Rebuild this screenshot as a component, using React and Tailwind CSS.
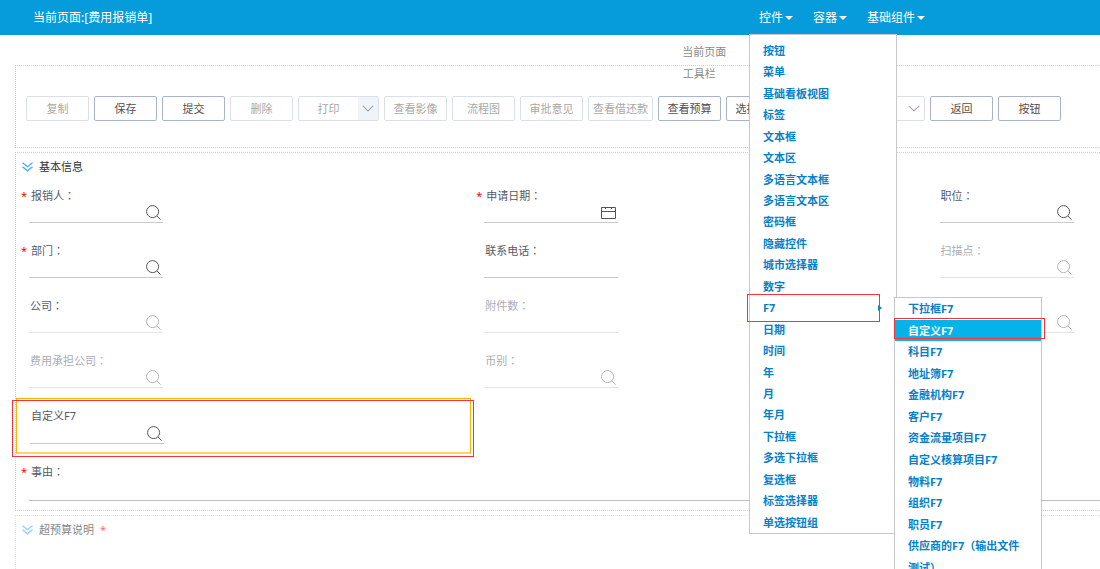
// src/App.jsx
import React from 'react';

const MENUS = ['控件', '容器', '基础组件'];

const CONTROLS = [
    '按钮', '菜单', '基础看板视图', '标签', '文本框', '文本区', '多语言文本框', '多语言文本区',
    '密码框', '隐藏控件', '城市选择器', '数字', 'F7', '日期', '时间', '年', '月', '年月',
    '下拉框', '多选下拉框', '复选框', '标签选择器', '单选按钮组',
];

const F7_TYPES = [
    '下拉框F7', '自定义F7', '科目F7', '地址簿F7', '金融机构F7', '客户F7', '资金流量项目F7',
    '自定义核算项目F7', '物料F7', '组织F7', '职员F7', '供应商的F7（输出文件测试）',
];

const FIELDS = [
    { id: 'claimant', label: '报销人', icon: 'search', required: true },
    { id: 'apply-date', label: '申请日期', icon: 'calendar', required: true },
    { id: 'position', label: '职位', icon: 'search' },
    { id: 'department', label: '部门', icon: 'search', required: true },
    { id: 'phone', label: '联系电话' },
    { id: 'scan-point', label: '扫描点', icon: 'search', disabled: true },
    { id: 'company', label: '公司', icon: 'search', disabled: true, darkLabel: true },
    { id: 'attachments', label: '附件数', disabled: true },
    { id: 'extra', label: '', icon: 'search', disabled: true },
    { id: 'cost-company', label: '费用承担公司', icon: 'search', disabled: true },
    { id: 'currency', label: '币别', icon: 'search', disabled: true },
];

const SearchIcon = () => (
    <svg viewBox="0 0 15 15" className="w-[15px] h-[15px]" fill="none" stroke="currentColor" strokeWidth="1">
        <circle cx="6.6" cy="6.6" r="6" />
        <path d="M11 11l3.6 3.6" />
    </svg>
);

const CalendarIcon = () => (
    <svg viewBox="0 0 15 15" className="w-[15px] h-[15px]" fill="none" stroke="currentColor">
        <path d="M.5 2.5h14v11H.5zM.5 6.5h14M4.5 2v2M10.5 2v2" />
    </svg>
);

const ChevronIcon = () => (
    <svg viewBox="0 0 12 7" className="w-3 h-[7px] text-[#a3a8b2]" fill="none" stroke="currentColor" strokeWidth="1.2">
        <path d="M.8.8L6 6 11.2.8" />
    </svg>
);

const CollapseIcon = () => (
    <svg viewBox="0 0 11 10" className="w-[11px] h-[10px] text-[#4bb0f0]" fill="none" stroke="currentColor" strokeWidth="1.4">
        <path d="M.5.7l5 4 5-4M.5 4.8l5 4 5-4" />
    </svg>
);

const ToolButton = ({ children, disabled, wide }) => (
    <button
        type="button"
        disabled={disabled}
        className={`h-[25px] shrink-0 rounded-[2px] border whitespace-nowrap ${wide ? 'w-[65px]' : 'w-[63px]'} ${
            disabled ? 'border-[#dadfea] text-[#a8a8a8]' : 'border-[#a9b4cc] text-[#505050]'
        }`}
    >
        {children}
    </button>
);

// The TC face centres the full-width colon
const Colon = () => <span className="font-['Noto_Sans_CJK_TC',sans-serif]">：</span>;

const Field = ({ id, label, icon, required, disabled, darkLabel, selected }) => (
    <div
        className={`relative h-full pl-[13px] pt-[9px] ${
            selected ? 'border border-b-2 border-[#ffb300] border-b-[#ffd466]' : ''
        }`}
    >
        <label
            htmlFor={id}
            className={`relative block h-4 leading-4 ${required ? 'pl-[2px]' : 'pl-px'} ${
                disabled && !darkLabel ? 'text-[#a9adb5]' : 'text-[#565b66]'
            }`}
        >
            {required && <span className="absolute -left-2 top-px text-[#ff0000]">*</span>}
            {label}
            {label && !selected && <Colon />}
        </label>
        <div
            className={`flex h-5 w-[134px] items-center border-b pb-px pr-[2px] ${
                disabled ? 'border-[#e4e4e4] text-[#b5b5b5]' : 'border-[#cbcbcb] text-[#555]'
            }`}
        >
            <input id={id} disabled={disabled} className="h-full min-w-0 flex-1 outline-none" />
            {icon && (
                <button type="button" disabled={disabled} aria-label="选择">
                    {icon === 'search' ? <SearchIcon /> : <CalendarIcon />}
                </button>
            )}
        </div>
        {selected && (
            <div className="pointer-events-none absolute -left-[5px] -right-1 top-px -bottom-[5px] border border-[#f5333a]" />
        )}
    </div>
);

const F7Menu = () => (
    <ul className="absolute left-[144px] top-0 z-10 grid h-[282px] w-[148px] grid-rows-13 border border-[#c6c8cc] bg-white">
        {F7_TYPES.map((name) => (
            <li
                key={name}
                className={`relative ${name === '自定义F7' ? 'bg-[#05b2ea]' : ''} ${
                    name.length > 12 ? 'row-span-2' : ''
                }`}
            >
                <a
                    href="#"
                    className={`block px-[13px] leading-[22px] ${name === '自定义F7' ? 'text-white' : 'text-[#0780c8]'}`}
                >
                    {name}
                </a>
                {name === '自定义F7' && (
                    <div className="pointer-events-none absolute -left-px -right-1 -top-[2px] bottom-[2px] border border-[#f5333a]" />
                )}
            </li>
        ))}
    </ul>
);

const ControlMenu = () => (
    <ul className="absolute left-0 top-[34px] z-10 grid h-[500px] w-[148px] auto-rows-fr border border-[#c6c8cc] bg-white pt-[5px] text-[11px] font-bold">
        {CONTROLS.map((name) => (
            <li key={name} className="relative">
                <a href="#" className="flex items-center justify-between pl-[13px] pr-[14px] leading-[22px] text-[#0780c8]">
                    {name}
                    {name === 'F7' && (
                        <span className="border-y-[3px] border-l-[4px] border-y-transparent border-l-[#0780c8]" />
                    )}
                </a>
                {name === 'F7' && (
                    <>
                        <F7Menu />
                        <div className="pointer-events-none absolute -left-[3px] -top-[3px] right-4 -bottom-[3px] border border-[#f5333a]" />
                    </>
                )}
            </li>
        ))}
    </ul>
);

const SectionTitle = ({ children }) => (
    <h2 className="flex h-[25px] items-center gap-[6px] pl-[6px] pt-[3px]">
        <CollapseIcon />
        {children}
    </h2>
);

const App = () => {
    return (
        <div className="flex h-screen flex-col overflow-hidden bg-white font-['Noto_Sans','Noto_Sans_CJK_SC',sans-serif] text-[11px] leading-4">
            <header className="flex h-[35px] shrink-0 items-center justify-between bg-[#069cdc] pl-[33px] pr-[165px] text-xs text-white">
                <h1>当前页面:[费用报销单]</h1>
                <nav className="relative flex h-full">
                    {MENUS.map((name) => (
                        <button key={name} type="button" className="flex items-center gap-[2px] px-[10px]">
                            {name}
                            <span className="border-x-4 border-t-4 border-x-transparent border-t-white" />
                        </button>
                    ))}
                    <ControlMenu />
                </nav>
            </header>

            <main className="flex flex-1 flex-col gap-1 pl-[15px]">
                <p className="h-[26px] pl-[61.5%] pt-[9px] text-[#8a8a8a]">当前页面</p>

                <section className="border-y border-l border-dotted border-[#d2d2d2] pb-[26px]">
                    <p className="pl-[61.5%] text-[#8a8a8a]">工具栏</p>
                    <div className="mt-[14px] flex gap-[5px] pl-[10px]">
                        <ToolButton disabled>复制</ToolButton>
                        <ToolButton>保存</ToolButton>
                        <ToolButton>提交</ToolButton>
                        <ToolButton disabled>删除</ToolButton>
                        <div className="flex h-[25px] w-[81px] shrink-0 overflow-hidden rounded-[2px] border border-[#dadfea]">
                            <button type="button" disabled className="flex-1 text-[#a8a8a8]">打印</button>
                            <button type="button" disabled aria-label="打印选项" className="grid w-5 place-items-center bg-[#f0f4f9]">
                                <ChevronIcon />
                            </button>
                        </div>
                        <ToolButton disabled>查看影像</ToolButton>
                        <ToolButton disabled>流程图</ToolButton>
                        <ToolButton disabled>审批意见</ToolButton>
                        <ToolButton disabled wide>查看借还款</ToolButton>
                        <ToolButton>查看预算</ToolButton>
                        <ToolButton>选择预算</ToolButton>
                        <button
                            type="button"
                            disabled
                            aria-label="更多"
                            className="flex h-[25px] w-[131px] shrink-0 items-center justify-end rounded-[2px] border border-[#dadfea] pr-1"
                        >
                            <ChevronIcon />
                        </button>
                        <ToolButton>返回</ToolButton>
                        <ToolButton>按钮</ToolButton>
                    </div>
                </section>

                <section className="border-y border-l border-dotted border-[#d2d2d2]">
                    <SectionTitle>
                        <span className="text-[#333]">基本信息</span>
                    </SectionTitle>
                    <div className="grid auto-rows-[55px] grid-cols-[42%_42%_16%]">
                        {FIELDS.map((field) => (
                            <Field key={field.id} {...field} />
                        ))}
                        <div className="col-start-1 h-14">
                            <Field id="custom-f7" label="自定义F7" icon="search" selected />
                        </div>
                    </div>
                    <div className="pb-[9px] pl-[13px] pt-[10px]">
                        <label htmlFor="reason" className="relative block pl-[2px] text-[#565b66]">
                            <span className="absolute -left-2 top-px text-[#ff0000]">*</span>
                            事由
                            <Colon />
                        </label>
                        <input id="reason" className="block h-[21px] w-full border-b border-[#bdbdbd] outline-none" />
                    </div>
                </section>

                <section className="flex-1 border-l border-t border-dotted border-[#d2d2d2] opacity-60">
                    <SectionTitle>
                        <span className="text-[#333]">超预算说明</span>
                        <span className="text-[#ff0000]">*</span>
                    </SectionTitle>
                </section>
            </main>
        </div>
    );
};

export default App;
